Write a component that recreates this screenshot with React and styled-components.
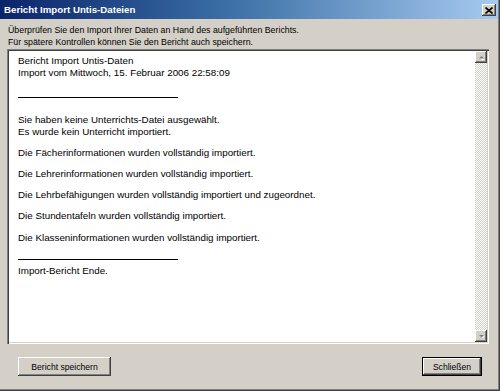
import React from "react";
import styled, { createGlobalStyle, css } from "styled-components";

const GlobalStyle = createGlobalStyle`
  html, body { margin: 0; padding: 0; background: #d4d0c8; }
  body { font-family: "Liberation Sans", Arial, sans-serif; }
`;

const Window = styled.div`
  width: 500px;
  height: 391px;
  box-sizing: border-box;
  background: #d4d0c8;
  border-right: 1px solid #404040;
  border-bottom: 1px solid #404040;
  box-shadow: inset -1px -1px 0 #808080;
  display: flex;
  flex-direction: column;
`;

const TitleBar = styled.div`
  height: 19px;
  flex: 0 0 19px;
  margin-right: 1px;
  background: linear-gradient(to right, #0a246a 0%, #3a6ea5 45%, #a6caf0 100%);
  display: flex;
  align-items: center;
  justify-content: space-between;
  padding: 0 2px 0 4px;
  box-sizing: border-box;
`;

const Title = styled.span`
  color: #fff;
  font-weight: bold;
  font-size: 9.7px;
  line-height: 19px;
  white-space: nowrap;
`;

const raised = css`
  background: #d4d0c8;
  box-shadow: inset -1px -1px 0 #404040, inset 1px 1px 0 #ffffff,
    inset -2px -2px 0 #808080, inset 2px 2px 0 #d4d0c8;
`;

const CloseButton = styled.div`
  ${raised}
  width: 14px;
  height: 12px;
  display: flex;
  align-items: center;
  justify-content: center;
  margin-top: 1px;
`;

const Body = styled.div`
  flex: 1;
  display: flex;
  flex-direction: column;
  padding: 5px 10px 0 7px;
`;

const Intro = styled.div`
  font-size: 8.8px;
  line-height: 12px;
  color: #000;
  padding-left: 1px;
  white-space: nowrap;
`;

const ReportBox = styled.div`
  margin-top: 1px;
  height: 295px;
  box-sizing: border-box;
  background: #fff;
  box-shadow: inset 1px 1px 0 #808080, inset 2px 2px 0 #404040,
    inset -1px -1px 0 #ffffff, inset -2px -2px 0 #d4d0c8;
  padding: 2px;
  display: flex;
`;

const Report = styled.div`
  flex: 1;
  padding: 4px 9px;
  font-size: 9.8px;
  line-height: 12px;
  color: #000;
  white-space: nowrap;
`;

const Para = styled.div`
  margin-top: ${(p) => p.$gap || 0}px;
`;

const Rule = styled.div`
  margin-top: ${(p) => p.$gap || 0}px;
  width: 160px;
  height: 1px;
  background: #000;
`;

const Scrollbar = styled.div`
  width: 12px;
  display: flex;
  flex-direction: column;
`;

const ScrollButton = styled.div`
  ${raised}
  width: 12px;
  height: 12px;
  flex: 0 0 12px;
  display: flex;
  align-items: center;
  justify-content: center;
`;

const Track = styled.div`
  flex: 1;
  background: repeating-conic-gradient(#d4d0c8 0 25%, #ffffff 0 50%) 0 0 / 2px 2px;
`;

const ButtonRow = styled.div`
  margin-top: 13px;
  display: flex;
  justify-content: space-between;
  padding: 0 7px 0 11px;
`;

const Button = styled.div`
  ${raised}
  width: ${(p) => p.$w}px;
  height: 19px;
  box-sizing: border-box;
  display: flex;
  align-items: center;
  justify-content: center;
  font-size: 8.6px;
  color: #000;
  white-space: nowrap;
  ${(p) =>
    p.$default &&
    css`
      box-shadow: inset 0 0 0 1px #000, inset -2px -2px 0 #404040,
        inset 2px 2px 0 #ffffff, inset -3px -3px 0 #808080;
    `}
`;

const Arrow = ({ up }) => (
  <svg width="7" height="5" viewBox="0 0 7 5">
    {up ? (
      <>
        <polygon points="1.5,4 3.5,2 5.5,4" fill="#ffffff" transform="translate(1,1)" />
        <polygon points="1,3.5 3.5,1 6,3.5" fill="#808080" />
      </>
    ) : (
      <>
        <polygon points="1.5,1 3.5,3 5.5,1" fill="#ffffff" transform="translate(1,1)" />
        <polygon points="1,1 3.5,3.5 6,1" fill="#808080" />
      </>
    )}
  </svg>
);

const CloseGlyph = () => (
  <svg width="8" height="7" viewBox="0 0 8 7">
    <path d="M0.5 0.5 L7.5 6.5 M7.5 0.5 L0.5 6.5" stroke="#000" strokeWidth="1.6" />
  </svg>
);

export default function App() {
  return (
    <>
      <GlobalStyle />
      <Window>
        <TitleBar>
          <Title>Bericht Import Untis-Dateien</Title>
          <CloseButton>
            <CloseGlyph />
          </CloseButton>
        </TitleBar>
        <Body>
          <Intro>
            Überprüfen Sie den Import Ihrer Daten an Hand des aufgeführten Berichts.
            <br />
            Für spätere Kontrollen können Sie den Bericht auch speichern.
          </Intro>
          <ReportBox>
            <Report>
              <Para>Bericht Import Untis-Daten</Para>
              <Para>Import vom Mittwoch, 15. Februar 2006 22:58:09</Para>
              <Rule $gap={18} />
              <Para $gap={16}>
                Sie haben keine Unterrichts-Datei ausgewählt.
                <br />
                Es wurde kein Unterricht importiert.
              </Para>
              <Para $gap={9}>Die Fächerinformationen wurden vollständig importiert.</Para>
              <Para $gap={9}>Die Lehrerinformationen wurden vollständig importiert.</Para>
              <Para $gap={9}>
                Die Lehrbefähigungen wurden vollständig importiert und zugeordnet.
              </Para>
              <Para $gap={9}>Die Stundentafeln wurden vollständig importiert.</Para>
              <Para $gap={10}>Die Klasseninformationen wurden vollständig importiert.</Para>
              <Rule $gap={15} />
              <Para $gap={5}>Import-Bericht Ende.</Para>
            </Report>
            <Scrollbar>
              <ScrollButton>
                <Arrow up />
              </ScrollButton>
              <Track />
              <ScrollButton>
                <Arrow />
              </ScrollButton>
            </Scrollbar>
          </ReportBox>
          <ButtonRow>
            <Button $w={93}>Bericht speichern</Button>
            <Button $w={60} $default>
              Schließen
            </Button>
          </ButtonRow>
        </Body>
      </Window>
    </>
  );
}
